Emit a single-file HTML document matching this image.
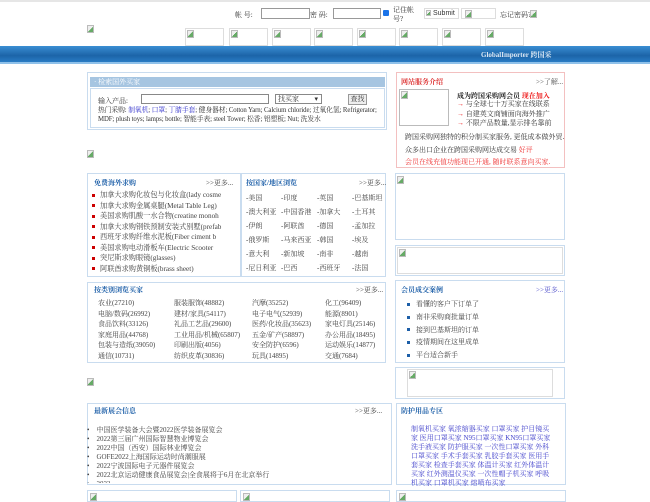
<!DOCTYPE html>
<html><head><meta charset="utf-8"><style>
*{margin:0;padding:0;box-sizing:border-box}
body{width:650px;height:500px;overflow:hidden;background:#fff;font-family:"Liberation Serif","Noto Serif CJK SC",serif;font-size:7px;color:#333;position:relative}
.a{position:absolute}
.box{position:absolute;border:1px solid #c9dcef}
.img{position:absolute;border:1px solid #ddd;background:#fff}
.bi{position:absolute;width:7px;height:8px;border:1px solid #bbb;background:linear-gradient(135deg,#eee 50%,#6a6 50%)}
.t{position:absolute;color:#1d5fa8;font-weight:bold;font-size:7px}
.m{position:absolute;color:#444;font-size:7px}
ul{list-style:none}
.red li:before{content:"";display:inline-block;width:3px;height:3px;background:#c00;margin-right:5px;vertical-align:middle}
.blu li:before{content:"";display:inline-block;width:3px;height:3px;background:#1d5fa8;margin-right:6px;vertical-align:middle}
</style></head><body>
<div class="a" style="left:0;top:0;width:650px;height:2px;background:#e6e6e6"></div>
<div class="a" style="left:235px;top:10px">帐 号:</div>
<div class="a" style="left:261px;top:8px;width:49px;height:11px;border:1px solid #999"></div>
<div class="a" style="left:310px;top:10px">密 码:</div>
<div class="a" style="left:333px;top:8px;width:48px;height:11px;border:1px solid #999"></div>
<div class="a" style="left:383px;top:10px;width:6px;height:6px;background:#1a73e8;border-radius:1px"></div>
<div class="a" style="left:393px;top:6px;line-height:9px">记住帐<br>号?</div>
<div class="img" style="left:424px;top:8px;width:35px;height:11px;font-family:'Liberation Sans';font-size:7px;padding-left:8px;line-height:9px">Submit</div>
<div class="bi" style="left:426px;top:10px;width:5px;height:6px"></div>
<div class="img" style="left:461px;top:8px;width:35px;height:11px"></div>
<div class="bi" style="left:465px;top:10px"></div>
<div class="a" style="left:500px;top:10px">忘记密码?</div>
<div class="bi" style="left:530px;top:10px"></div>
<div class="bi" style="left:87px;top:25px"></div>
<div class="img" style="left:185px;top:28px;width:39px;height:18px"></div>
<div class="img" style="left:229px;top:28px;width:39px;height:18px"></div>
<div class="img" style="left:272px;top:28px;width:39px;height:18px"></div>
<div class="img" style="left:314px;top:28px;width:39px;height:18px"></div>
<div class="img" style="left:357px;top:28px;width:39px;height:18px"></div>
<div class="img" style="left:399px;top:28px;width:39px;height:18px"></div>
<div class="img" style="left:442px;top:28px;width:39px;height:18px"></div>
<div class="img" style="left:485px;top:28px;width:39px;height:18px"></div>
<div class="bi" style="left:187px;top:30px"></div><div class="bi" style="left:231px;top:30px"></div><div class="bi" style="left:274px;top:30px"></div><div class="bi" style="left:316px;top:30px"></div><div class="bi" style="left:359px;top:30px"></div><div class="bi" style="left:401px;top:30px"></div><div class="bi" style="left:444px;top:30px"></div><div class="bi" style="left:487px;top:30px"></div>
<div class="a" style="left:0;top:46px;width:650px;height:18px;background:linear-gradient(#3a8ed3,#1c64a8 60%,#2a7cc4);border-bottom:2px solid #8fc1ea"></div>
<div class="a" style="left:481px;top:50px;color:#dde9f5;font-size:7px;font-weight:bold">GlobalImporter 跨国采</div>

<div class="box" style="left:87px;top:72px;width:300px;height:58px"></div>
<div class="a" style="left:90px;top:77px;width:295px;height:10px;background:#a6c5e1;color:#fff;padding-left:4px;line-height:10px">· 检索国外买家</div>
<div class="box" style="left:90px;top:88px;width:295px;height:40px"></div>
<div class="a" style="left:98px;top:96px">输入产品:</div>
<div class="a" style="left:141px;top:94px;width:128px;height:10px;border:1px solid #888"></div>
<div class="a" style="left:275px;top:94px;width:47px;height:10px;border:1px solid #888;font-size:7px;padding-left:2px;line-height:8px">找买家<span style="position:absolute;right:3px;top:0">▾</span></div>
<div class="a" style="left:348px;top:94px;width:19px;height:11px;border:1px solid #999;background:#eee;text-align:center;line-height:9px">查找</div>
<div class="a" style="left:98px;top:106px;width:288px;line-height:9px;font-size:6.8px;letter-spacing:-0.1px">热门采购: <span style="color:#33c">制氧机</span>; <span style="color:#33c">口罩</span>; <span style="color:#33c">丁腈手套</span>; 健身器材; Cotton Yarn; Calcium chloride; 过氧化氢; Refrigerator; MDF; plush toys; lamps; bottle; 智能手表; steel Tower; 松香; 铝塑板; Nut; 洗发水</div>
<div class="bi" style="left:87px;top:150px"></div>

<div class="a" style="left:396px;top:72px;width:169px;height:96px;border:1px solid #f3c0c0"></div>
<div class="a" style="left:401px;top:77px;color:#d33;font-weight:bold">网站服务介绍</div>
<div class="a" style="left:536px;top:77px;color:#555">>>了解...</div>
<div class="img" style="left:399px;top:89px;width:50px;height:37px;border-color:#bbb"></div>
<div class="bi" style="left:401px;top:91px"></div>
<div class="a" style="left:457px;top:91px;font-weight:bold;color:#222">成为跨国采购网会员 <span style="color:#e22">现在加入</span></div>
<div class="a" style="left:457px;top:100px;line-height:9.5px"><span style="color:#e22">→</span> 与全球七十万买家在线联系<br><span style="color:#e22">→</span> 自建英文商铺面向海外推广<br><span style="color:#e22">→</span> 不限产品数量,显示排名靠前</div>
<div class="a" style="left:405px;top:132px">跨国采购网独特的积分制买家服务, 更低成本做外贸.</div>
<div class="a" style="left:405px;top:145px">众多出口企业在跨国采购网达成交易 <span style="color:#e33">好评</span></div>
<div class="a" style="left:405px;top:157px;color:#e33">会员在线充值功能现已开通, 随时联系意向买家.</div>

<div class="box" style="left:87px;top:173px;width:154px;height:104px"></div>
<div class="t" style="left:94px;top:178px">免费海外求购</div>
<div class="m" style="left:206px;top:178px">>>更多...</div>
<ul class="a red" style="left:92px;top:190px;line-height:10.5px;font-size:7.2px;color:#444;width:146px;overflow:hidden;white-space:nowrap">
<li>加拿大求购化妆包与化妆盒(lady cosme</li><li>加拿大求购金属桌腿(Metal Table Leg)</li><li>美国求购肌酸一水合物(creatine monoh</li><li>加拿大求购钢铁预制安装式别墅(prefab</li><li>西班牙求购纤维水泥板(Fiber ciment b</li><li>美国求购电动滑板车(Electric Scooter</li><li>突尼斯求购眼镜(glasses)</li><li>阿联酋求购黄铜板(brass sheet)</li></ul>

<div class="box" style="left:241px;top:173px;width:145px;height:104px"></div>
<div class="t" style="left:246px;top:178px">按国家/地区浏览</div>
<div class="m" style="left:359px;top:178px">>>更多...</div>
<div class="a" style="left:246px;top:192px;line-height:13.9px;color:#444">
<div style="display:grid;grid-template-columns:35px 36px 35px 35px">
<span>-美国</span><span>-印度</span><span>-英国</span><span>-巴基斯坦</span>
<span>-澳大利亚</span><span>-中国香港</span><span>-加拿大</span><span>-土耳其</span>
<span>-伊朗</span><span>-阿联酋</span><span>-德国</span><span>-孟加拉</span>
<span>-俄罗斯</span><span>-马来西亚</span><span>-韩国</span><span>-埃及</span>
<span>-意大利</span><span>-新加坡</span><span>-南非</span><span>-越南</span>
<span>-尼日利亚</span><span>-巴西</span><span>-西班牙</span><span>-法国</span></div></div>

<div class="box" style="left:395px;top:173px;width:170px;height:67px"></div>
<div class="bi" style="left:397px;top:176px"></div>
<div class="box" style="left:395px;top:245px;width:170px;height:31px"></div>
<div class="img" style="left:397px;top:247px;width:166px;height:27px"></div>
<div class="bi" style="left:399px;top:249px"></div>

<div class="box" style="left:87px;top:282px;width:299px;height:81px"></div>
<div class="t" style="left:94px;top:285px">按类别浏览买家</div>
<div class="m" style="left:356px;top:285px">>>更多...</div>
<div class="a" style="left:98px;top:298px;line-height:10.5px;color:#444">
<div style="display:grid;grid-template-columns:76px 78px 73px 60px">
<span>农业(27210)</span><span>服装服饰(48882)</span><span>汽摩(35252)</span><span>化工(96409)</span>
<span>电脑/数码(26992)</span><span>建材/家具(54117)</span><span>电子电气(52939)</span><span>能源(8901)</span>
<span>食品饮料(33126)</span><span>礼品工艺品(29600)</span><span>医药/化妆品(35623)</span><span>家电灯具(25146)</span>
<span>家庭用品(44768)</span><span>工业用品/机械(65807)</span><span>五金/矿产(58897)</span><span>办公用品(18495)</span>
<span>包装与造纸(39050)</span><span>印刷出版(4056)</span><span>安全防护(6596)</span><span>运动娱乐(14877)</span>
<span>通信(10731)</span><span>纺织皮革(30836)</span><span>玩具(14895)</span><span>交通(7684)</span></div></div>
<div class="bi" style="left:87px;top:378px"></div>

<div class="box" style="left:395px;top:280px;width:170px;height:83px"></div>
<div class="t" style="left:401px;top:285px">会员成交案例</div>
<div class="a" style="left:536px;top:285px;color:#55c">>>更多...</div>
<ul class="a blu" style="left:407px;top:298px;line-height:12.8px;color:#444"><li>看懂的客户下订单了</li><li>南非采购商批量订单</li><li>接到巴基斯坦的订单</li><li>疫情期间在这里成单</li><li>平台适合新手</li></ul>
<div class="box" style="left:395px;top:367px;width:170px;height:32px"></div>
<div class="img" style="left:407px;top:369px;width:146px;height:28px"></div>
<div class="bi" style="left:409px;top:371px"></div>

<div class="box" style="left:87px;top:403px;width:305px;height:82px"></div>
<div class="t" style="left:94px;top:406px">最新展会信息</div>
<div class="m" style="left:355px;top:406px">>>更多...</div>
<div class="a" style="left:87px;top:426px;line-height:9px;color:#444;height:57px;overflow:hidden">
<div>•&nbsp;&nbsp;&nbsp; 中国医学装备大会暨2022医学装备展览会</div><div>•&nbsp;&nbsp;&nbsp; 2022第三届广州国际智慧物业博览会</div><div>•&nbsp;&nbsp;&nbsp; 2022中国（西安）国际林业博览会</div><div>•&nbsp;&nbsp;&nbsp; GOFE2022上海国际运动时尚潮服展</div><div>•&nbsp;&nbsp;&nbsp; 2022宁波国际电子元器件展览会</div><div>•&nbsp;&nbsp;&nbsp; 2022北京运动健康食品展览会|全食展将于6月在北京举行</div><div>•&nbsp;&nbsp;&nbsp; 2022</div></div>

<div class="box" style="left:396px;top:403px;width:170px;height:82px"></div>
<div class="t" style="left:401px;top:406px">防护用品专区</div>
<div class="a" style="left:411px;top:425px;width:140px;line-height:9px;color:#44c">制氧机买家 氧浓缩器买家 口罩买家 护目镜买家 医用口罩买家 N95口罩买家 KN95口罩买家 洗手液买家 防护服买家 一次性口罩买家 外科口罩买家 手术手套买家 乳胶手套买家 医用手套买家 检查手套买家 体温计买家 红外体温计买家 红外测温仪买家 一次性帽子机买家 呼吸机买家 口罩机买家 熔喷布买家</div>

<div class="box" style="left:87px;top:490px;width:150px;height:12px"></div><div class="bi" style="left:90px;top:493px"></div>
<div class="box" style="left:240px;top:490px;width:150px;height:12px"></div><div class="bi" style="left:243px;top:493px"></div>
<div class="box" style="left:396px;top:490px;width:170px;height:12px"></div><div class="bi" style="left:399px;top:493px"></div>
</body></html>
